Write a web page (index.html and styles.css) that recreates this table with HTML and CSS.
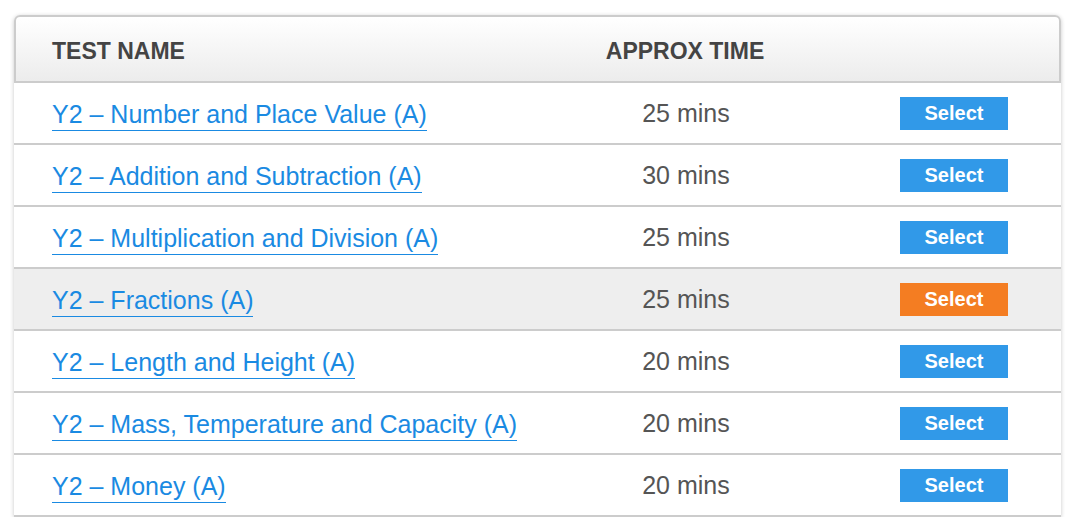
FILE: index.html
```html
<!DOCTYPE html>
<html lang="en">
<head>
<meta charset="utf-8">
<title>Tests</title>
<link rel="stylesheet" href="styles.css">
</head>
<body>
<div class="tests">
  <div class="row head">
    <div class="c-name">TEST NAME</div>
    <div class="c-time">APPROX TIME</div>
    <div class="c-act"></div>
  </div>
  <div class="row">
    <div class="c-name"><a href="#" class="test-link">Y2 – Number and Place Value (A)</a></div>
    <div class="c-time">25 mins</div>
    <div class="c-act"><a href="#" class="btn">Select</a></div>
  </div>
  <div class="row">
    <div class="c-name"><a href="#" class="test-link">Y2 – Addition and Subtraction (A)</a></div>
    <div class="c-time">30 mins</div>
    <div class="c-act"><a href="#" class="btn">Select</a></div>
  </div>
  <div class="row">
    <div class="c-name"><a href="#" class="test-link">Y2 – Multiplication and Division (A)</a></div>
    <div class="c-time">25 mins</div>
    <div class="c-act"><a href="#" class="btn">Select</a></div>
  </div>
  <div class="row is-hover">
    <div class="c-name"><a href="#" class="test-link">Y2 – Fractions (A)</a></div>
    <div class="c-time">25 mins</div>
    <div class="c-act"><a href="#" class="btn btn-active">Select</a></div>
  </div>
  <div class="row">
    <div class="c-name"><a href="#" class="test-link">Y2 – Length and Height (A)</a></div>
    <div class="c-time">20 mins</div>
    <div class="c-act"><a href="#" class="btn">Select</a></div>
  </div>
  <div class="row">
    <div class="c-name"><a href="#" class="test-link">Y2 – Mass, Temperature and Capacity (A)</a></div>
    <div class="c-time">20 mins</div>
    <div class="c-act"><a href="#" class="btn">Select</a></div>
  </div>
  <div class="row">
    <div class="c-name"><a href="#" class="test-link">Y2 – Money (A)</a></div>
    <div class="c-time">20 mins</div>
    <div class="c-act"><a href="#" class="btn">Select</a></div>
  </div>
</div>
</body>
</html>
```
FILE: styles.css
```css
html, body {
  margin: 0;
  padding: 0;
  background: #ffffff;
}
body {
  padding: 15px 15px 0 14px;
  font-family: "Liberation Sans", Arial, Helvetica, sans-serif;
}
.tests {
  width: 1047px;
  background: #fff;
  border-radius: 6px 6px 0 0;
  box-shadow: 0 1px 4px rgba(0, 0, 0, 0.22);
}
.row {
  display: grid;
  grid-template-columns: 511px 322px 214px;
  align-items: center;
  height: 62px;
  box-sizing: border-box;
  border-bottom: 2px solid #cccccc;
}
.row.head {
  height: 68px;
  grid-template-columns: 509px 322px 212px;
  border: 2px solid #cccccc;
  border-radius: 6px 6px 0 0;
  background: linear-gradient(#ffffff, #ececec);
  font-weight: bold;
  font-size: 23px;
  color: #444444;
  padding-top: 4px;
}
.row.head .c-name {
  padding-left: 36px;
}
.row.is-hover {
  background: #eeeeee;
}
.c-name {
  padding-left: 38px;
}
.c-time {
  text-align: center;
  font-size: 25px;
  color: #555555;
}
.head .c-time {
  font-size: 23px;
  color: #444444;
  padding-right: 2px;
}
.c-act {
  display: flex;
  justify-content: center;
}
.test-link {
  display: inline-block;
  font-size: 25px;
  line-height: 28px;
  color: #1a8ae2;
  text-decoration: none;
  border-bottom: 1.5px solid #1a8ae2;
  padding-bottom: 2px;
  margin-top: 5px;
}
.btn {
  display: block;
  width: 108px;
  height: 33px;
  line-height: 32px;
  text-align: center;
  background: #3199e8;
  color: #ffffff;
  font-weight: bold;
  font-size: 20px;
  text-decoration: none;
}
.btn-active {
  background: #f47d22;
}
```
